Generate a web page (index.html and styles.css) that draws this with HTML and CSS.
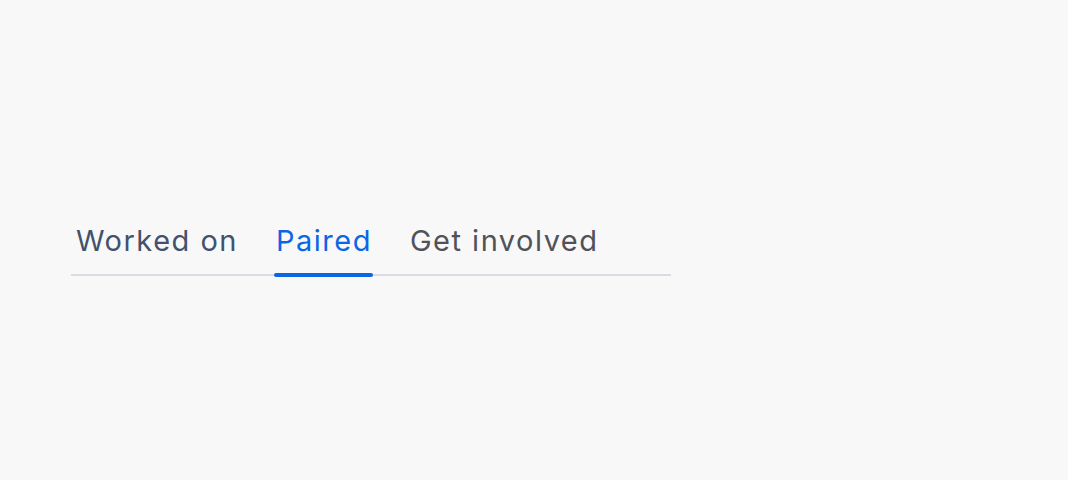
FILE: index.html
```html
<!DOCTYPE html>
<html lang="en">
<head>
<meta charset="utf-8">
<title>Tabs</title>
<link rel="stylesheet" href="styles.css">
</head>
<body>
<main class="page">
  <div class="tabs" role="tablist">
    <div class="tab tab-worked" role="tab">Worked on</div>
    <div class="tab tab-active" role="tab" aria-selected="true">Paired</div>
    <div class="tab tab-involved" role="tab">Get involved</div>
  </div>
</main>
</body>
</html>
```
FILE: styles.css
```css
html, body {
  margin: 0;
  padding: 0;
  background: #f8f8f8;
}
body {
  width: 1068px;
  height: 480px;
  font-family: Inter, "Noto Sans", sans-serif;
}
.page {
  padding: 225px 0 0 71px;
}
.tabs {
  position: relative;
  width: 597px;
  display: flex;
  gap: 35px;
  padding: 0 0 17px 3px;
  border-bottom: 2px solid #dadce1;
}
.tab {
  position: relative;
  padding: 0 1px 0 2px;
  font-size: 29px;
  line-height: 32px;
  letter-spacing: 1.5px;
  white-space: nowrap;
}
.tab-worked { color: #42526e; }
.tab-involved { color: #505258; }
.tab-active { color: #0c66e4; }
.tab-active::after {
  content: "";
  position: absolute;
  left: 0;
  right: 0;
  bottom: -20px;
  height: 4px;
  border-radius: 2px;
  background: #0c66e4;
}
```
